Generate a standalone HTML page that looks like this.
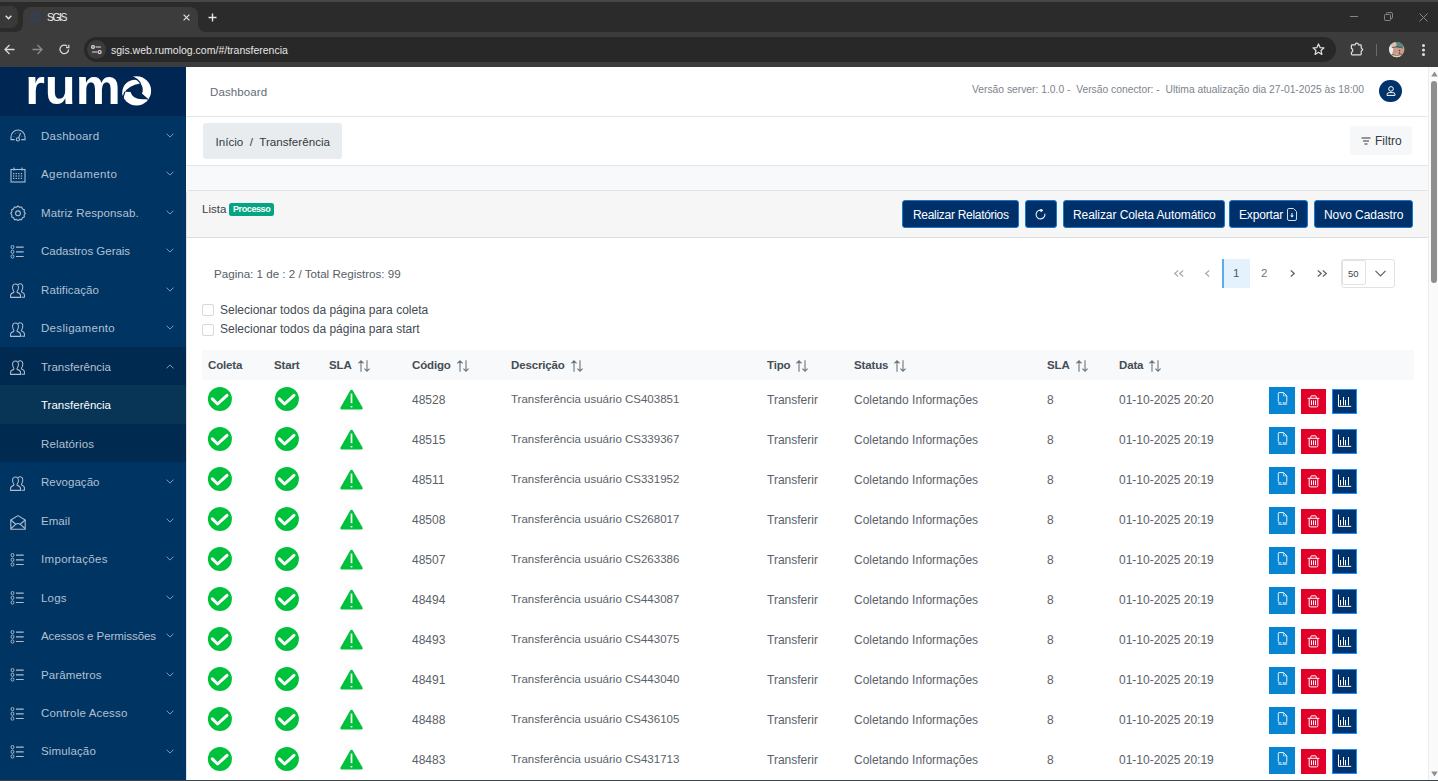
<!DOCTYPE html><html><head><meta charset="utf-8"><title>SGIS</title><style>
*{box-sizing:border-box;margin:0;padding:0}
html,body{width:1438px;height:781px;overflow:hidden;background:#fff;font-family:"Liberation Sans",sans-serif}
.abs{position:absolute}
.t{position:absolute;white-space:nowrap}
</style></head><body>
<div class="abs" style="left:0;top:0;width:1438px;height:67px;background:#3c3c3c"></div>
<div class="abs" style="left:0;top:0;width:1438px;height:32px;background:#2b2b2b"></div>
<div class="abs" style="left:0;top:0;width:1438px;height:2px;background:#474747"></div>
<div class="abs" style="left:23px;top:7px;width:175px;height:30px;border-radius:8px 8px 0 0;background:#3c3c3c"></div>
<div class="abs" style="left:15px;top:24px;width:8px;height:8px;background:#3c3c3c"></div><div class="abs" style="left:7px;top:16px;width:16px;height:16px;border-radius:0 0 8px 0;background:#2b2b2b"></div>
<div class="abs" style="left:198px;top:24px;width:8px;height:8px;background:#3c3c3c"></div><div class="abs" style="left:198px;top:16px;width:16px;height:16px;border-radius:0 0 0 8px;background:#2b2b2b"></div>
<div class="abs" style="left:-8px;top:6px;width:26px;height:22px;border-radius:7px;background:#393939"></div>
<svg class="abs" style="left:4.5px;top:14.5px" width="7" height="5" viewBox="0 0 7 5" fill="none" stroke="#e8e8e8" stroke-width="1.4"><path d="M0.7 0.8 L3.5 3.8 L6.3 0.8"/></svg>
<svg class="abs" style="left:29.5px;top:10.5px" width="11" height="13" viewBox="0 0 14 14" fill="none" stroke="#2a4672" stroke-width="1.1"><path d="M7 0.8 L12.6 4 V10 L7 13.2 L1.4 10 V4 Z"/><path d="M9.3 5.3 A3 3 0 1 0 9.3 8.7"/></svg>
<div class="t" style="left:47px;top:11.6px;font-size:10.4px;color:#f0f0f0;letter-spacing:-1.45px">SGIS</div>
<svg class="abs" style="left:182.6px;top:13.6px" width="7" height="7" viewBox="0 0 7 7" stroke="#e0e0e0" stroke-width="1.2"><path d="M0.6 0.6 L6.4 6.4 M6.4 0.6 L0.6 6.4"/></svg>
<svg class="abs" style="left:208px;top:13px" width="9" height="9" viewBox="0 0 9 9" stroke="#e6e6e6" stroke-width="1.4"><path d="M4.5 0.5 V8.5 M0.5 4.5 H8.5"/></svg>
<div class="abs" style="left:1350px;top:16px;width:8px;height:1px;background:#858585"></div>
<svg class="abs" style="left:1384px;top:12px" width="9" height="9" viewBox="0 0 9 9" fill="none" stroke="#858585" stroke-width="1"><rect x="0.5" y="2.5" width="6" height="6" rx="0.8"/><path d="M2.5 2.5 V1.5 Q2.5 0.5 3.5 0.5 H7 Q8.5 0.5 8.5 2 V5.5 Q8.5 6.5 7 6.5"/></svg>
<svg class="abs" style="left:1419px;top:13px" width="9" height="9" viewBox="0 0 9 9" stroke="#858585" stroke-width="1"><path d="M0.5 0.5 L8.5 8.5 M8.5 0.5 L0.5 8.5"/></svg>
<svg class="abs" style="left:4px;top:44px" width="11" height="11" viewBox="0 0 11 11" fill="none" stroke="#d8d8d8" stroke-width="1.3"><path d="M10.5 5.5 H1 M5.5 1 L1 5.5 L5.5 10"/></svg>
<svg class="abs" style="left:32px;top:44px" width="11" height="11" viewBox="0 0 11 11" fill="none" stroke="#8a8a8a" stroke-width="1.3"><path d="M0.5 5.5 H10 M5.5 1 L10 5.5 L5.5 10"/></svg>
<svg class="abs" style="left:59px;top:44px" width="11" height="11" viewBox="0 0 11 11" fill="none" stroke="#d8d8d8" stroke-width="1.3"><path d="M9.6 5.5 A4.3 4.3 0 1 1 8.2 2.2"/><path d="M9.8 0.8 V3.6 H7" /></svg>
<div class="abs" style="left:84px;top:37px;width:1252px;height:25px;border-radius:12.5px;background:#282828"></div>
<div class="abs" style="left:87px;top:40px;width:19px;height:19px;border-radius:50%;background:#3b3b3b"></div>
<svg class="abs" style="left:91px;top:45px" width="11" height="9" viewBox="0 0 11 9" fill="none" stroke="#e0e0e0" stroke-width="1.2"><circle cx="2" cy="2" r="1.4"/><path d="M4.6 2 H10 M1 7 H6.2"/><circle cx="8.6" cy="7" r="1.5"/></svg>
<div class="t" style="left:111px;top:43.7px;font-size:10.5px;color:#e6e6e6">sgis.web.rumolog.com<span style="color:#e6e6e6">/#/transferencia</span></div>
<svg class="abs" style="left:1312px;top:43px" width="13" height="13" viewBox="0 0 13 13" fill="none" stroke="#e0e0e0" stroke-width="1.2" stroke-linejoin="round"><path d="M6.5 0.9 L8.1 4.6 L12 4.9 L9 7.5 L9.9 11.4 L6.5 9.3 L3.1 11.4 L4 7.5 L1 4.9 L4.9 4.6 Z"/></svg>
<svg class="abs" style="left:1350px;top:42px" width="15" height="14" viewBox="0 0 15 14" fill="none" stroke="#e0e0e0" stroke-width="1.2" stroke-linejoin="round"><path d="M2.2 2.8 H5.2 Q5.2 1.2 6.8 1.2 Q8.4 1.2 8.4 2.8 H10.4 Q11.2 2.8 11.2 3.6 V6 L12.8 7.6 L11.2 9.2 V12 Q11.2 12.8 10.4 12.8 H2.2 Q1.4 12.8 1.4 12 V10.2 Q2.8 10.2 2.8 8.4 Q2.8 6.6 1.4 6.6 V3.6 Q1.4 2.8 2.2 2.8 Z"/></svg>
<div class="abs" style="left:1376px;top:44px;width:1px;height:12px;background:#6a6a6a"></div>
<svg class="abs" style="left:1389px;top:42px" width="16" height="16" viewBox="0 0 16 16"><defs><clipPath id="av"><circle cx="7.7" cy="7.6" r="7.7"/></clipPath></defs><g clip-path="url(#av)"><rect width="16" height="16" fill="#caa08c"/><ellipse cx="1.5" cy="7" rx="2.6" ry="6" fill="#e8eef0"/><ellipse cx="10.5" cy="2.5" rx="5" ry="3.2" fill="#4f8a86"/><ellipse cx="4.5" cy="2.5" rx="3" ry="2.5" fill="#d9c2b0"/><ellipse cx="8" cy="15" rx="6" ry="2.6" fill="#e6dcbc"/><path d="M2.8 5.5 Q8 4 14 6" stroke="#5a4038" stroke-width="0.8" fill="none"/><circle cx="10.5" cy="8.5" r="0.8" fill="#4a3a36"/><circle cx="10.5" cy="11" r="0.8" fill="#4a3a36"/><ellipse cx="6" cy="9.5" rx="1.4" ry="1.8" fill="#d58a8a"/><path d="M3 12.5 Q7 14.5 13 12.5" stroke="#5a4038" stroke-width="0.7" fill="none"/></g></svg>
<div class="abs" style="left:1422px;top:44px;width:3px;height:3px;border-radius:50%;background:#e0e0e0;box-shadow:0 4.5px 0 #e0e0e0,0 9px 0 #e0e0e0"></div>
<div class="abs" style="left:0;top:67px;width:186px;height:713px;background:#003462"></div>
<div class="abs" style="left:0;top:67px;width:186px;height:49px;background:#002654"></div>
<svg class="abs" style="left:0px;top:67px" width="186" height="49" viewBox="0 0 186 49">
<text x="25.2" y="37.4" font-family="Liberation Sans" font-weight="bold" font-size="50" fill="#fff" textLength="95.5" lengthAdjust="spacingAndGlyphs">rum</text>
<g transform="translate(136.5,23.85)">
<circle r="14.6" fill="#fff"/>
<path fill="#002654" d="M5.3,3.4 C6.9,0 6.6,-4.5 4.1,-7.2 C0,-7.2 -7.5,-4.6 -11.6,0.8 L-5.9,1.2 C-4.4,7 2,10 12.6,7.6 L10.6,7.8 Z"/>
<path fill="none" stroke="#002654" stroke-width="1.3" d="M-5.8,-14.8 C-0.5,-12.5 2.6,-10.5 4.1,-7.2"/>
<path fill="#002654" d="M-15.6,1 A15.6 15.6 0 0 1 -4.8,-14.9 L-4.4,-14.1 C-1.5,-12.8 0.5,-11.8 1.8,-10.8 A13 13 0 0 0 -14.3,2.2 Z"/>
<path fill="none" stroke="#002654" stroke-width="1.2" d="M-11.6,0.8 C-12.5,3 -13.2,5 -13.6,8"/>
<path fill="none" stroke="#002654" stroke-width="1.3" d="M5.3,3.4 L11.2,8.6"/>
</g>
</svg>
<div class="t" style="left:41px;top:128.65px;font-size:11.5px;line-height:15px;color:#b2c0d2;letter-spacing:0.227px">Dashboard</div>
<svg class="abs" style="left:9.5px;top:129px" width="16" height="14" viewBox="0 0 16 14" fill="none" stroke="#aebdd0" stroke-width="1.1">
<path d="M4.6 10.6 H1 V8 A7 7 0 0 1 15 8 V10.6 H11.2"/><path d="M8.6 8.9 L10.6 4"/><circle cx="7.9" cy="10.4" r="1.6"/>
<path d="M3.6 7.2 l0.3 0.3 M5 4.3 l0.5 0.5 M8 3.2 v0.4 M12.2 7.2 l-0.3 0.3" stroke-width="1"/></svg>
<svg class="abs" style="left:166px;top:132.90px" width="8" height="5" viewBox="0 0 8 5" fill="none" stroke="#8da0b8" stroke-width="0.95"><path d="M0.5 0.6 L4 4.1 L7.5 0.6"/></svg>
<div class="t" style="left:41px;top:167.14px;font-size:11.5px;line-height:15px;color:#b2c0d2;letter-spacing:0.419px">Agendamento</div>
<svg class="abs" style="left:10px;top:167px" width="16" height="16" viewBox="0 0 16 16" fill="none" stroke="#aebdd0" stroke-width="1.1">
<rect x="1" y="2.5" width="14" height="12.5"/><path d="M4 0.5v3 M12 0.5v3"/><rect x="3.0" y="6.0" width="1.3" height="1.2" fill="#aebdd0" stroke="none"/><rect x="3.0" y="8.4" width="1.3" height="1.2" fill="#aebdd0" stroke="none"/><rect x="3.0" y="10.8" width="1.3" height="1.2" fill="#aebdd0" stroke="none"/><rect x="5.6" y="6.0" width="1.3" height="1.2" fill="#aebdd0" stroke="none"/><rect x="5.6" y="8.4" width="1.3" height="1.2" fill="#aebdd0" stroke="none"/><rect x="5.6" y="10.8" width="1.3" height="1.2" fill="#aebdd0" stroke="none"/><rect x="8.2" y="6.0" width="1.3" height="1.2" fill="#aebdd0" stroke="none"/><rect x="8.2" y="8.4" width="1.3" height="1.2" fill="#aebdd0" stroke="none"/><rect x="8.2" y="10.8" width="1.3" height="1.2" fill="#aebdd0" stroke="none"/><rect x="10.8" y="6.0" width="1.3" height="1.2" fill="#aebdd0" stroke="none"/><rect x="10.8" y="8.4" width="1.3" height="1.2" fill="#aebdd0" stroke="none"/><rect x="10.8" y="10.8" width="1.3" height="1.2" fill="#aebdd0" stroke="none"/></svg>
<svg class="abs" style="left:166px;top:171.39px" width="8" height="5" viewBox="0 0 8 5" fill="none" stroke="#8da0b8" stroke-width="0.95"><path d="M0.5 0.6 L4 4.1 L7.5 0.6"/></svg>
<div class="t" style="left:41px;top:205.63px;font-size:11.5px;line-height:15px;color:#b2c0d2;letter-spacing:0.110px">Matriz Responsab.</div>
<svg class="abs" style="left:10px;top:205px" width="16" height="16" viewBox="0 0 16 16" fill="none" stroke="#aebdd0" stroke-width="1.1">
<path d="M8 1 L9.6 2.3 L11.6 2 L12.5 3.9 L14.4 4.7 L14.1 6.8 L15.3 8.4 L14.1 10 L14.3 12 L12.4 12.8 L11.5 14.7 L9.5 14.4 L8 15.6 L6.5 14.4 L4.5 14.7 L3.6 12.8 L1.7 12 L1.9 10 L0.7 8.4 L1.9 6.8 L1.6 4.7 L3.5 3.9 L4.4 2 L6.4 2.3 Z" stroke-linejoin="round"/><circle cx="8" cy="8.3" r="2.4"/></svg>
<svg class="abs" style="left:166px;top:209.88px" width="8" height="5" viewBox="0 0 8 5" fill="none" stroke="#8da0b8" stroke-width="0.95"><path d="M0.5 0.6 L4 4.1 L7.5 0.6"/></svg>
<div class="t" style="left:41px;top:244.12px;font-size:11.5px;line-height:15px;color:#b2c0d2;letter-spacing:-0.026px">Cadastros Gerais</div>
<svg class="abs" style="left:10px;top:245px" width="15" height="14" viewBox="0 0 15 14" fill="none" stroke="#aebdd0" stroke-width="0.95">
<ellipse cx="2.5" cy="2.1" rx="1.45" ry="1.7"/><ellipse cx="2.5" cy="6.8" rx="1.45" ry="1.7"/><ellipse cx="2.5" cy="11.5" rx="1.45" ry="1.7"/><path d="M6 2.1h7.7 M6 6.8h7.7 M6 11.5h7.7" stroke-width="1.2"/></svg>
<svg class="abs" style="left:166px;top:248.37px" width="8" height="5" viewBox="0 0 8 5" fill="none" stroke="#8da0b8" stroke-width="0.95"><path d="M0.5 0.6 L4 4.1 L7.5 0.6"/></svg>
<div class="t" style="left:41px;top:282.61px;font-size:11.5px;line-height:15px;color:#b2c0d2;letter-spacing:0.098px">Ratificação</div>
<svg class="abs" style="left:10px;top:283px" width="15" height="15" viewBox="0 0 16 15" preserveAspectRatio="none" fill="none" stroke="#aebdd0" stroke-width="1.1" stroke-linejoin="round">
<path d="M5.5 1 C3.2 1 2.6 3 2.8 5 C3 7 4 8 4.2 8.6 L4 9.4 C2 10 0.6 10.8 0.6 12.5 V14.4 H11.2 V12.5 C11.2 10.8 9.6 10 7.6 9.4 L7.4 8.6 C7.8 8 8.8 7 9 5 C9.2 3 8.4 1 5.5 1 Z"/>
<path d="M8.6 1.6 C9.4 1 10.2 0.8 10.8 0.8 C13.2 0.8 13.8 2.8 13.6 4.8 C13.4 6.6 12.6 7.6 12.2 8.2 L12.4 9 C14.2 9.6 15.4 10.4 15.4 12 V14.2 H12.2"/></svg>
<svg class="abs" style="left:166px;top:286.86px" width="8" height="5" viewBox="0 0 8 5" fill="none" stroke="#8da0b8" stroke-width="0.95"><path d="M0.5 0.6 L4 4.1 L7.5 0.6"/></svg>
<div class="t" style="left:41px;top:321.10px;font-size:11.5px;line-height:15px;color:#b2c0d2;letter-spacing:0.313px">Desligamento</div>
<svg class="abs" style="left:10px;top:322px" width="15" height="15" viewBox="0 0 16 15" preserveAspectRatio="none" fill="none" stroke="#aebdd0" stroke-width="1.1" stroke-linejoin="round">
<path d="M5.5 1 C3.2 1 2.6 3 2.8 5 C3 7 4 8 4.2 8.6 L4 9.4 C2 10 0.6 10.8 0.6 12.5 V14.4 H11.2 V12.5 C11.2 10.8 9.6 10 7.6 9.4 L7.4 8.6 C7.8 8 8.8 7 9 5 C9.2 3 8.4 1 5.5 1 Z"/>
<path d="M8.6 1.6 C9.4 1 10.2 0.8 10.8 0.8 C13.2 0.8 13.8 2.8 13.6 4.8 C13.4 6.6 12.6 7.6 12.2 8.2 L12.4 9 C14.2 9.6 15.4 10.4 15.4 12 V14.2 H12.2"/></svg>
<svg class="abs" style="left:166px;top:325.35px" width="8" height="5" viewBox="0 0 8 5" fill="none" stroke="#8da0b8" stroke-width="0.95"><path d="M0.5 0.6 L4 4.1 L7.5 0.6"/></svg>
<div class="abs" style="left:0;top:346.94px;width:186px;height:38.49px;background:#012a50"></div>
<div class="t" style="left:41px;top:359.58px;font-size:11.5px;line-height:15px;color:#b2c0d2;letter-spacing:0.011px">Transferência</div>
<svg class="abs" style="left:10px;top:360px" width="15" height="15" viewBox="0 0 16 15" preserveAspectRatio="none" fill="none" stroke="#aebdd0" stroke-width="1.1" stroke-linejoin="round">
<path d="M5.5 1 C3.2 1 2.6 3 2.8 5 C3 7 4 8 4.2 8.6 L4 9.4 C2 10 0.6 10.8 0.6 12.5 V14.4 H11.2 V12.5 C11.2 10.8 9.6 10 7.6 9.4 L7.4 8.6 C7.8 8 8.8 7 9 5 C9.2 3 8.4 1 5.5 1 Z"/>
<path d="M8.6 1.6 C9.4 1 10.2 0.8 10.8 0.8 C13.2 0.8 13.8 2.8 13.6 4.8 C13.4 6.6 12.6 7.6 12.2 8.2 L12.4 9 C14.2 9.6 15.4 10.4 15.4 12 V14.2 H12.2"/></svg>
<svg class="abs" style="left:166px;top:363.83px" width="8" height="5" viewBox="0 0 8 5" fill="none" stroke="#8da0b8" stroke-width="0.95"><path d="M0.5 4.4 L4 0.9 L7.5 4.4"/></svg>
<div class="abs" style="left:0;top:385.43px;width:186px;height:38.49px;background:#083556"></div>
<div class="t" style="left:41px;top:398.07px;font-size:11.5px;line-height:15px;color:#ffffff;letter-spacing:0.011px">Transferência</div>
<div class="abs" style="left:0;top:423.92px;width:186px;height:38.49px;background:#012a50"></div>
<div class="t" style="left:41px;top:436.56px;font-size:11.5px;line-height:15px;color:#b2c0d2;letter-spacing:0.125px">Relatórios</div>
<div class="t" style="left:41px;top:475.06px;font-size:11.5px;line-height:15px;color:#b2c0d2;letter-spacing:0.037px">Revogação</div>
<svg class="abs" style="left:10px;top:476px" width="15" height="15" viewBox="0 0 16 15" preserveAspectRatio="none" fill="none" stroke="#aebdd0" stroke-width="1.1" stroke-linejoin="round">
<path d="M5.5 1 C3.2 1 2.6 3 2.8 5 C3 7 4 8 4.2 8.6 L4 9.4 C2 10 0.6 10.8 0.6 12.5 V14.4 H11.2 V12.5 C11.2 10.8 9.6 10 7.6 9.4 L7.4 8.6 C7.8 8 8.8 7 9 5 C9.2 3 8.4 1 5.5 1 Z"/>
<path d="M8.6 1.6 C9.4 1 10.2 0.8 10.8 0.8 C13.2 0.8 13.8 2.8 13.6 4.8 C13.4 6.6 12.6 7.6 12.2 8.2 L12.4 9 C14.2 9.6 15.4 10.4 15.4 12 V14.2 H12.2"/></svg>
<svg class="abs" style="left:166px;top:479.31px" width="8" height="5" viewBox="0 0 8 5" fill="none" stroke="#8da0b8" stroke-width="0.95"><path d="M0.5 0.6 L4 4.1 L7.5 0.6"/></svg>
<div class="t" style="left:41px;top:513.54px;font-size:11.5px;line-height:15px;color:#b2c0d2;letter-spacing:0.050px">Email</div>
<svg class="abs" style="left:10px;top:514.5px" width="16" height="15" viewBox="0 0 16 15" fill="none" stroke="#aebdd0" stroke-width="1.1" stroke-linejoin="round">
<path d="M0.8 5 L8 0.6 L15.2 5 V14.2 H0.8 Z"/><path d="M0.8 5 L5.5 9 M15.2 5 L10.5 9 M1 13.5 L6 9.2 C7.2 8.3 8.8 8.3 10 9.2 L15 13.5"/></svg>
<svg class="abs" style="left:166px;top:517.79px" width="8" height="5" viewBox="0 0 8 5" fill="none" stroke="#8da0b8" stroke-width="0.95"><path d="M0.5 0.6 L4 4.1 L7.5 0.6"/></svg>
<div class="t" style="left:41px;top:552.04px;font-size:11.5px;line-height:15px;color:#b2c0d2;letter-spacing:0.323px">Importações</div>
<svg class="abs" style="left:10px;top:553px" width="15" height="14" viewBox="0 0 15 14" fill="none" stroke="#aebdd0" stroke-width="0.95">
<ellipse cx="2.5" cy="2.1" rx="1.45" ry="1.7"/><ellipse cx="2.5" cy="6.8" rx="1.45" ry="1.7"/><ellipse cx="2.5" cy="11.5" rx="1.45" ry="1.7"/><path d="M6 2.1h7.7 M6 6.8h7.7 M6 11.5h7.7" stroke-width="1.2"/></svg>
<svg class="abs" style="left:166px;top:556.29px" width="8" height="5" viewBox="0 0 8 5" fill="none" stroke="#8da0b8" stroke-width="0.95"><path d="M0.5 0.6 L4 4.1 L7.5 0.6"/></svg>
<div class="t" style="left:41px;top:590.52px;font-size:11.5px;line-height:15px;color:#b2c0d2;letter-spacing:0.221px">Logs</div>
<svg class="abs" style="left:10px;top:591px" width="15" height="14" viewBox="0 0 15 14" fill="none" stroke="#aebdd0" stroke-width="0.95">
<ellipse cx="2.5" cy="2.1" rx="1.45" ry="1.7"/><ellipse cx="2.5" cy="6.8" rx="1.45" ry="1.7"/><ellipse cx="2.5" cy="11.5" rx="1.45" ry="1.7"/><path d="M6 2.1h7.7 M6 6.8h7.7 M6 11.5h7.7" stroke-width="1.2"/></svg>
<svg class="abs" style="left:166px;top:594.77px" width="8" height="5" viewBox="0 0 8 5" fill="none" stroke="#8da0b8" stroke-width="0.95"><path d="M0.5 0.6 L4 4.1 L7.5 0.6"/></svg>
<div class="t" style="left:41px;top:629.01px;font-size:11.5px;line-height:15px;color:#b2c0d2;letter-spacing:-0.067px">Acessos e Permissões</div>
<svg class="abs" style="left:10px;top:630px" width="15" height="14" viewBox="0 0 15 14" fill="none" stroke="#aebdd0" stroke-width="0.95">
<ellipse cx="2.5" cy="2.1" rx="1.45" ry="1.7"/><ellipse cx="2.5" cy="6.8" rx="1.45" ry="1.7"/><ellipse cx="2.5" cy="11.5" rx="1.45" ry="1.7"/><path d="M6 2.1h7.7 M6 6.8h7.7 M6 11.5h7.7" stroke-width="1.2"/></svg>
<svg class="abs" style="left:166px;top:633.26px" width="8" height="5" viewBox="0 0 8 5" fill="none" stroke="#8da0b8" stroke-width="0.95"><path d="M0.5 0.6 L4 4.1 L7.5 0.6"/></svg>
<div class="t" style="left:41px;top:667.50px;font-size:11.5px;line-height:15px;color:#b2c0d2;letter-spacing:0.128px">Parâmetros</div>
<svg class="abs" style="left:10px;top:668px" width="15" height="14" viewBox="0 0 15 14" fill="none" stroke="#aebdd0" stroke-width="0.95">
<ellipse cx="2.5" cy="2.1" rx="1.45" ry="1.7"/><ellipse cx="2.5" cy="6.8" rx="1.45" ry="1.7"/><ellipse cx="2.5" cy="11.5" rx="1.45" ry="1.7"/><path d="M6 2.1h7.7 M6 6.8h7.7 M6 11.5h7.7" stroke-width="1.2"/></svg>
<svg class="abs" style="left:166px;top:671.75px" width="8" height="5" viewBox="0 0 8 5" fill="none" stroke="#8da0b8" stroke-width="0.95"><path d="M0.5 0.6 L4 4.1 L7.5 0.6"/></svg>
<div class="t" style="left:41px;top:706.00px;font-size:11.5px;line-height:15px;color:#b2c0d2;letter-spacing:0.189px">Controle Acesso</div>
<svg class="abs" style="left:10px;top:707px" width="15" height="14" viewBox="0 0 15 14" fill="none" stroke="#aebdd0" stroke-width="0.95">
<ellipse cx="2.5" cy="2.1" rx="1.45" ry="1.7"/><ellipse cx="2.5" cy="6.8" rx="1.45" ry="1.7"/><ellipse cx="2.5" cy="11.5" rx="1.45" ry="1.7"/><path d="M6 2.1h7.7 M6 6.8h7.7 M6 11.5h7.7" stroke-width="1.2"/></svg>
<svg class="abs" style="left:166px;top:710.25px" width="8" height="5" viewBox="0 0 8 5" fill="none" stroke="#8da0b8" stroke-width="0.95"><path d="M0.5 0.6 L4 4.1 L7.5 0.6"/></svg>
<div class="t" style="left:41px;top:744.49px;font-size:11.5px;line-height:15px;color:#b2c0d2;letter-spacing:0.137px">Simulação</div>
<svg class="abs" style="left:10px;top:745px" width="15" height="14" viewBox="0 0 15 14" fill="none" stroke="#aebdd0" stroke-width="0.95">
<ellipse cx="2.5" cy="2.1" rx="1.45" ry="1.7"/><ellipse cx="2.5" cy="6.8" rx="1.45" ry="1.7"/><ellipse cx="2.5" cy="11.5" rx="1.45" ry="1.7"/><path d="M6 2.1h7.7 M6 6.8h7.7 M6 11.5h7.7" stroke-width="1.2"/></svg>
<svg class="abs" style="left:166px;top:748.74px" width="8" height="5" viewBox="0 0 8 5" fill="none" stroke="#8da0b8" stroke-width="0.95"><path d="M0.5 0.6 L4 4.1 L7.5 0.6"/></svg>
<div class="abs" style="left:186px;top:116px;width:1242px;height:1px;background:#e4e7ea"></div>
<div class="t" style="left:210px;top:85.5px;font-size:11.5px;letter-spacing:0.1px;color:#5f6b77">Dashboard</div>
<div class="t" style="left:972px;top:84px;font-size:10.3px;color:#7d848c">Versão server: 1.0.0 -&nbsp; Versão conector: -&nbsp; Ultima atualização dia 27-01-2025 às 18:00</div>
<div class="abs" style="left:1379px;top:79.7px;width:22.5px;height:22.5px;border-radius:50%;background:#00336a"></div>
<svg class="abs" style="left:1385.5px;top:85.5px" width="10" height="11" viewBox="0 0 10 11" fill="none" stroke="#fff" stroke-width="1"><circle cx="5" cy="2.9" r="2.3"/><path d="M1 9.4 V8.6 Q1 6.6 3.2 6.6 H6.8 Q9 6.6 9 8.6 V9.4 Z"/></svg>
<div class="abs" style="left:203px;top:123px;width:139px;height:36px;border-radius:3px;background:#e9ecef"></div>
<div class="t" style="left:215.5px;top:134.6px;font-size:11.65px;color:#333a40">Início&nbsp; /&nbsp; Transferência</div>
<div class="abs" style="left:1350px;top:126px;width:62px;height:29px;border-radius:3px;background:#f6f7f9"></div>
<svg class="abs" style="left:1361px;top:137px" width="10" height="8" viewBox="0 0 10 8" stroke="#333" stroke-width="1.1"><path d="M0.5 1 H9.5 M2 4 H8 M3.5 7 H6.5"/></svg>
<div class="t" style="left:1375px;top:134px;font-size:12px;color:#333a40">Filtro</div>
<div class="abs" style="left:186px;top:165px;width:1242px;height:1px;background:#e4e7ea"></div>
<div class="abs" style="left:186px;top:166px;width:1242px;height:615px;background:#f8f9fa"></div>
<div class="abs" style="left:186px;top:190px;width:1243px;height:600px;background:#fff;border:1px solid #dfe1e4;border-radius:3px"></div>
<div class="abs" style="left:187px;top:191px;width:1241px;height:47px;background:#f6f6f6;border-bottom:1px solid #dcdde0"></div>
<div class="t" style="left:202px;top:203px;font-size:11.5px;color:#3a4249">Lista</div>
<div class="abs" style="left:229px;top:202.7px;width:44.5px;height:13.3px;border-radius:2.5px;background:#04a582"></div>
<div class="t" style="left:233px;top:203.6px;font-size:9px;font-weight:bold;letter-spacing:-0.4px;color:#fff">Processo</div>
<div class="abs" style="left:902px;top:200px;width:117px;height:28px;border-radius:3px;background:#00306a;border:1px solid #1578c8"></div>
<div class="abs" style="left:1025px;top:200px;width:32px;height:28px;border-radius:3px;background:#00306a;border:1px solid #1578c8"></div>
<div class="abs" style="left:1063px;top:200px;width:162px;height:28px;border-radius:3px;background:#00306a;border:1px solid #1578c8"></div>
<div class="abs" style="left:1229px;top:200px;width:79px;height:28px;border-radius:3px;background:#00306a;border:1px solid #1578c8"></div>
<div class="abs" style="left:1314px;top:200px;width:99px;height:28px;border-radius:3px;background:#00306a;border:1px solid #1578c8"></div>
<div class="t" style="left:913px;top:208px;font-size:12px;color:#fff;letter-spacing:-0.3px">Realizar Relatórios</div>
<svg class="abs" style="left:1035.3px;top:208.9px" width="11" height="11" viewBox="0 0 11 11" fill="none" stroke="#e8eef5" stroke-width="1.1"><path d="M6.6 1.25 A4.4 4.4 0 1 0 9.8 4.6"/><path d="M5.6 0.2 L8 1.3 L5.9 2.9 Z" fill="#fff" stroke="#fff" stroke-width="0.6" stroke-linejoin="round"/></svg>
<div class="t" style="left:1073px;top:208px;font-size:12px;color:#fff;letter-spacing:-0.08px">Realizar Coleta Automático</div>
<div class="t" style="left:1239px;top:208px;font-size:12px;color:#fff;letter-spacing:-0.15px">Exportar</div>
<svg class="abs" style="left:1287px;top:208px" width="10" height="13" viewBox="0 0 10 13" fill="none" stroke="#d5dde8" stroke-width="1"><path d="M1.8 0.5 H6.5 L9.5 3.5 V11 Q9.5 12.5 8 12.5 H2 Q0.5 12.5 0.5 11 V1.8 Q0.5 0.5 1.8 0.5 Z"/><path d="M5 5 V8.6" stroke-width="1.2"/><path d="M3.2 7.6 L5 9.6 L6.8 7.6 Z" fill="#fff" stroke="none"/></svg>
<div class="t" style="left:1324px;top:208px;font-size:12px;color:#fff;letter-spacing:-0.05px">Novo Cadastro</div>
<div class="t" style="left:214px;top:267px;font-size:11.6px;color:#555d65">Pagina: 1 de : 2 / Total Registros: 99</div>
<svg class="abs" style="left:1174px;top:270px" width="5" height="7" viewBox="0 0 5 7" fill="none" stroke="#a9afb5" stroke-width="1.3"><path d="M4.2 0.6 L0.8 3.5 L4.2 6.4"/></svg>
<svg class="abs" style="left:1179px;top:270px" width="5" height="7" viewBox="0 0 5 7" fill="none" stroke="#a9afb5" stroke-width="1.3"><path d="M4.2 0.6 L0.8 3.5 L4.2 6.4"/></svg>
<svg class="abs" style="left:1205px;top:270px" width="5" height="7" viewBox="0 0 5 7" fill="none" stroke="#a9afb5" stroke-width="1.3"><path d="M4.2 0.6 L0.8 3.5 L4.2 6.4"/></svg>
<div class="abs" style="left:1222px;top:259px;width:28px;height:29px;background:#e3f2fd;border-left:2px solid #5aaeee"></div>
<div class="t" style="left:1233px;top:267px;font-size:11.5px;color:#4f5861">1</div>
<div class="t" style="left:1261px;top:267px;font-size:11.5px;color:#6b737b">2</div>
<svg class="abs" style="left:1290px;top:270px" width="5" height="7" viewBox="0 0 5 7" fill="none" stroke="#5f6870" stroke-width="1.3"><path d="M0.8 0.6 L4.2 3.5 L0.8 6.4"/></svg>
<svg class="abs" style="left:1317px;top:270px" width="5" height="7" viewBox="0 0 5 7" fill="none" stroke="#5f6870" stroke-width="1.3"><path d="M0.8 0.6 L4.2 3.5 L0.8 6.4"/></svg>
<svg class="abs" style="left:1322px;top:270px" width="5" height="7" viewBox="0 0 5 7" fill="none" stroke="#5f6870" stroke-width="1.3"><path d="M0.8 0.6 L4.2 3.5 L0.8 6.4"/></svg>
<div class="abs" style="left:1341px;top:259px;width:54px;height:29px;border:1px solid #dfe3e7;border-radius:3px;background:#fff"></div>
<div class="abs" style="left:1342px;top:260px;width:24px;height:25px;border:1px solid #dfe3e7;border-radius:2px;background:#fff"></div>
<div class="t" style="left:1348px;top:268px;font-size:9.5px;color:#444">50</div>
<svg class="abs" style="left:1375px;top:270px" width="11" height="7" viewBox="0 0 11 7" fill="none" stroke="#5a636b" stroke-width="1.2"><path d="M0.5 0.8 L5.5 5.8 L10.5 0.8"/></svg>
<div class="abs" style="left:202px;top:304px;width:12px;height:12px;border:1px solid #d5d9dd;border-radius:2px;background:#fff"></div>
<div class="t" style="left:220px;top:302.5px;font-size:12px;color:#434b53">Selecionar todos da página para coleta</div>
<div class="abs" style="left:202px;top:323.5px;width:12px;height:12px;border:1px solid #d5d9dd;border-radius:2px;background:#fff"></div>
<div class="t" style="left:220px;top:322.0px;font-size:12px;color:#434b53">Selecionar todos da página para start</div>
<div class="abs" style="left:202px;top:350px;width:1212px;height:30px;background:#f8f9fa"></div>
<div class="t" style="left:208px;top:359px;font-size:11.5px;font-weight:bold;color:#454d55;letter-spacing:-0.15px">Coleta</div>
<div class="t" style="left:274px;top:359px;font-size:11.5px;font-weight:bold;color:#454d55;letter-spacing:-0.15px">Start</div>
<div class="t" style="left:329px;top:359px;font-size:11.5px;font-weight:bold;color:#454d55;letter-spacing:-0.15px">SLA<svg style="margin-left:6px;vertical-align:-3px" width="12" height="12" viewBox="0 0 12 12" fill="none" stroke="#6c757d" stroke-width="1.1"><path d="M3 11.8 V0.8 M0.4 3.4 L3 0.8 L5.6 3.4 M9 0.2 V11.2 M6.4 8.6 L9 11.2 L11.6 8.6"/></svg></div>
<div class="t" style="left:412px;top:359px;font-size:11.5px;font-weight:bold;color:#454d55;letter-spacing:-0.15px">Código<svg style="margin-left:6px;vertical-align:-3px" width="12" height="12" viewBox="0 0 12 12" fill="none" stroke="#6c757d" stroke-width="1.1"><path d="M3 11.8 V0.8 M0.4 3.4 L3 0.8 L5.6 3.4 M9 0.2 V11.2 M6.4 8.6 L9 11.2 L11.6 8.6"/></svg></div>
<div class="t" style="left:511px;top:359px;font-size:11.5px;font-weight:bold;color:#454d55;letter-spacing:-0.15px">Descrição<svg style="margin-left:6px;vertical-align:-3px" width="12" height="12" viewBox="0 0 12 12" fill="none" stroke="#6c757d" stroke-width="1.1"><path d="M3 11.8 V0.8 M0.4 3.4 L3 0.8 L5.6 3.4 M9 0.2 V11.2 M6.4 8.6 L9 11.2 L11.6 8.6"/></svg></div>
<div class="t" style="left:767px;top:359px;font-size:11.5px;font-weight:bold;color:#454d55;letter-spacing:-0.15px">Tipo<svg style="margin-left:6px;vertical-align:-3px" width="12" height="12" viewBox="0 0 12 12" fill="none" stroke="#6c757d" stroke-width="1.1"><path d="M3 11.8 V0.8 M0.4 3.4 L3 0.8 L5.6 3.4 M9 0.2 V11.2 M6.4 8.6 L9 11.2 L11.6 8.6"/></svg></div>
<div class="t" style="left:854px;top:359px;font-size:11.5px;font-weight:bold;color:#454d55;letter-spacing:-0.15px">Status<svg style="margin-left:6px;vertical-align:-3px" width="12" height="12" viewBox="0 0 12 12" fill="none" stroke="#6c757d" stroke-width="1.1"><path d="M3 11.8 V0.8 M0.4 3.4 L3 0.8 L5.6 3.4 M9 0.2 V11.2 M6.4 8.6 L9 11.2 L11.6 8.6"/></svg></div>
<div class="t" style="left:1047px;top:359px;font-size:11.5px;font-weight:bold;color:#454d55;letter-spacing:-0.15px">SLA<svg style="margin-left:6px;vertical-align:-3px" width="12" height="12" viewBox="0 0 12 12" fill="none" stroke="#6c757d" stroke-width="1.1"><path d="M3 11.8 V0.8 M0.4 3.4 L3 0.8 L5.6 3.4 M9 0.2 V11.2 M6.4 8.6 L9 11.2 L11.6 8.6"/></svg></div>
<div class="t" style="left:1119px;top:359px;font-size:11.5px;font-weight:bold;color:#454d55;letter-spacing:-0.15px">Data<svg style="margin-left:6px;vertical-align:-3px" width="12" height="12" viewBox="0 0 12 12" fill="none" stroke="#6c757d" stroke-width="1.1"><path d="M3 11.8 V0.8 M0.4 3.4 L3 0.8 L5.6 3.4 M9 0.2 V11.2 M6.4 8.6 L9 11.2 L11.6 8.6"/></svg></div>
<svg class="abs" style="left:207px;top:387px" width="26" height="26" viewBox="0 0 26 26"><circle cx="12.9" cy="12.1" r="12" fill="#00c13b"/><path d="M5.3 11.9 L10.6 17 L20 8.3" fill="none" stroke="#fff" stroke-width="3" stroke-linecap="round" stroke-linejoin="round"/></svg>
<svg class="abs" style="left:274px;top:387px" width="26" height="26" viewBox="0 0 26 26"><circle cx="12.9" cy="12.1" r="12" fill="#00c13b"/><path d="M5.3 11.9 L10.6 17 L20 8.3" fill="none" stroke="#fff" stroke-width="3" stroke-linecap="round" stroke-linejoin="round"/></svg>
<svg class="abs" style="left:340px;top:389px" width="23" height="21" viewBox="0 0 23 21"><path d="M11.5 2 L21.4 19.2 H1.6 Z" fill="#00c13b" stroke="#00c13b" stroke-width="2.6" stroke-linejoin="round"/><path d="M11.5 4.6 V14.2" stroke="#fff" stroke-width="1.7"/><rect x="10.65" y="17" width="1.7" height="1.4" fill="#fff"/></svg>
<div class="t" style="left:412px;top:393px;font-size:12px;color:#5a6169">48528</div>
<div class="t" style="left:511px;top:393px;font-size:11.5px;color:#5a6169">Transferência usuário CS403851</div>
<div class="t" style="left:767px;top:393px;font-size:12px;color:#5a6169">Transferir</div>
<div class="t" style="left:854px;top:393px;font-size:12px;color:#5a6169">Coletando Informações</div>
<div class="t" style="left:1047px;top:393px;font-size:12px;color:#5a6169">8</div>
<div class="t" style="left:1119px;top:393px;font-size:12px;color:#5a6169">01-10-2025 20:20</div>
<div class="abs" style="left:1269px;top:386.5px;width:26px;height:27px;background:#0784d2"></div>
<svg class="abs" style="left:1276px;top:392px" width="13" height="14" viewBox="0 0 13 14" fill="none" stroke="#fff" stroke-width="0.9"><path d="M2.3 9.8 V1.2 Q2.3 0.6 3 0.6 H7.6 L10.8 3.8 V9.8"/><path d="M7.6 0.8 V3.8 H10.6" stroke-width="0.7"/><text x="6.5" y="12.8" font-size="4.2" font-weight="bold" fill="#fff" stroke="none" text-anchor="middle" font-family="Liberation Sans" textLength="9" lengthAdjust="spacingAndGlyphs">XLSX</text></svg>
<div class="abs" style="left:1301px;top:389px;width:25px;height:25px;background:#e00028"></div>
<svg class="abs" style="left:1307px;top:395px" width="13" height="13" viewBox="0 0 13 13" fill="none" stroke="#fff" stroke-width="1.2" stroke-linejoin="round"><path d="M0.6 3.3 H12.4 M3.8 3.2 V1.6 Q3.8 0.8 4.6 0.8 H8.4 Q9.2 0.8 9.2 1.6 V3.2 M2.2 3.4 V10.8 Q2.2 11.9 3.3 11.9 H9.7 Q10.8 11.9 10.8 10.8 V3.4 M4.5 5.4 V10 M6.5 5.4 V10 M8.5 5.4 V10" stroke-width="1"/></svg>
<div class="abs" style="left:1332px;top:389px;width:25px;height:25px;background:#00336b;border:1px solid #1b8cff"></div>
<svg class="abs" style="left:1337px;top:394px" width="15" height="14" viewBox="0 0 15 14" fill="none" stroke="#fff" stroke-width="1"><path d="M1.5 0.5 V12.4 H14.2"/><path d="M3.5 11.4 V6 M6.5 11.4 V3 M8.5 11.4 V6 M11.5 11.4 V3" stroke-width="1"/></svg>
<svg class="abs" style="left:207px;top:427px" width="26" height="26" viewBox="0 0 26 26"><circle cx="12.9" cy="12.1" r="12" fill="#00c13b"/><path d="M5.3 11.9 L10.6 17 L20 8.3" fill="none" stroke="#fff" stroke-width="3" stroke-linecap="round" stroke-linejoin="round"/></svg>
<svg class="abs" style="left:274px;top:427px" width="26" height="26" viewBox="0 0 26 26"><circle cx="12.9" cy="12.1" r="12" fill="#00c13b"/><path d="M5.3 11.9 L10.6 17 L20 8.3" fill="none" stroke="#fff" stroke-width="3" stroke-linecap="round" stroke-linejoin="round"/></svg>
<svg class="abs" style="left:340px;top:429px" width="23" height="21" viewBox="0 0 23 21"><path d="M11.5 2 L21.4 19.2 H1.6 Z" fill="#00c13b" stroke="#00c13b" stroke-width="2.6" stroke-linejoin="round"/><path d="M11.5 4.6 V14.2" stroke="#fff" stroke-width="1.7"/><rect x="10.65" y="17" width="1.7" height="1.4" fill="#fff"/></svg>
<div class="t" style="left:412px;top:433px;font-size:12px;color:#5a6169">48515</div>
<div class="t" style="left:511px;top:433px;font-size:11.5px;color:#5a6169">Transferência usuário CS339367</div>
<div class="t" style="left:767px;top:433px;font-size:12px;color:#5a6169">Transferir</div>
<div class="t" style="left:854px;top:433px;font-size:12px;color:#5a6169">Coletando Informações</div>
<div class="t" style="left:1047px;top:433px;font-size:12px;color:#5a6169">8</div>
<div class="t" style="left:1119px;top:433px;font-size:12px;color:#5a6169">01-10-2025 20:19</div>
<div class="abs" style="left:1269px;top:426.5px;width:26px;height:27px;background:#0784d2"></div>
<svg class="abs" style="left:1276px;top:432px" width="13" height="14" viewBox="0 0 13 14" fill="none" stroke="#fff" stroke-width="0.9"><path d="M2.3 9.8 V1.2 Q2.3 0.6 3 0.6 H7.6 L10.8 3.8 V9.8"/><path d="M7.6 0.8 V3.8 H10.6" stroke-width="0.7"/><text x="6.5" y="12.8" font-size="4.2" font-weight="bold" fill="#fff" stroke="none" text-anchor="middle" font-family="Liberation Sans" textLength="9" lengthAdjust="spacingAndGlyphs">XLSX</text></svg>
<div class="abs" style="left:1301px;top:429px;width:25px;height:25px;background:#e00028"></div>
<svg class="abs" style="left:1307px;top:435px" width="13" height="13" viewBox="0 0 13 13" fill="none" stroke="#fff" stroke-width="1.2" stroke-linejoin="round"><path d="M0.6 3.3 H12.4 M3.8 3.2 V1.6 Q3.8 0.8 4.6 0.8 H8.4 Q9.2 0.8 9.2 1.6 V3.2 M2.2 3.4 V10.8 Q2.2 11.9 3.3 11.9 H9.7 Q10.8 11.9 10.8 10.8 V3.4 M4.5 5.4 V10 M6.5 5.4 V10 M8.5 5.4 V10" stroke-width="1"/></svg>
<div class="abs" style="left:1332px;top:429px;width:25px;height:25px;background:#00336b;border:1px solid #1b8cff"></div>
<svg class="abs" style="left:1337px;top:434px" width="15" height="14" viewBox="0 0 15 14" fill="none" stroke="#fff" stroke-width="1"><path d="M1.5 0.5 V12.4 H14.2"/><path d="M3.5 11.4 V6 M6.5 11.4 V3 M8.5 11.4 V6 M11.5 11.4 V3" stroke-width="1"/></svg>
<svg class="abs" style="left:207px;top:467px" width="26" height="26" viewBox="0 0 26 26"><circle cx="12.9" cy="12.1" r="12" fill="#00c13b"/><path d="M5.3 11.9 L10.6 17 L20 8.3" fill="none" stroke="#fff" stroke-width="3" stroke-linecap="round" stroke-linejoin="round"/></svg>
<svg class="abs" style="left:274px;top:467px" width="26" height="26" viewBox="0 0 26 26"><circle cx="12.9" cy="12.1" r="12" fill="#00c13b"/><path d="M5.3 11.9 L10.6 17 L20 8.3" fill="none" stroke="#fff" stroke-width="3" stroke-linecap="round" stroke-linejoin="round"/></svg>
<svg class="abs" style="left:340px;top:469px" width="23" height="21" viewBox="0 0 23 21"><path d="M11.5 2 L21.4 19.2 H1.6 Z" fill="#00c13b" stroke="#00c13b" stroke-width="2.6" stroke-linejoin="round"/><path d="M11.5 4.6 V14.2" stroke="#fff" stroke-width="1.7"/><rect x="10.65" y="17" width="1.7" height="1.4" fill="#fff"/></svg>
<div class="t" style="left:412px;top:473px;font-size:12px;color:#5a6169">48511</div>
<div class="t" style="left:511px;top:473px;font-size:11.5px;color:#5a6169">Transferência usuário CS331952</div>
<div class="t" style="left:767px;top:473px;font-size:12px;color:#5a6169">Transferir</div>
<div class="t" style="left:854px;top:473px;font-size:12px;color:#5a6169">Coletando Informações</div>
<div class="t" style="left:1047px;top:473px;font-size:12px;color:#5a6169">8</div>
<div class="t" style="left:1119px;top:473px;font-size:12px;color:#5a6169">01-10-2025 20:19</div>
<div class="abs" style="left:1269px;top:466.5px;width:26px;height:27px;background:#0784d2"></div>
<svg class="abs" style="left:1276px;top:472px" width="13" height="14" viewBox="0 0 13 14" fill="none" stroke="#fff" stroke-width="0.9"><path d="M2.3 9.8 V1.2 Q2.3 0.6 3 0.6 H7.6 L10.8 3.8 V9.8"/><path d="M7.6 0.8 V3.8 H10.6" stroke-width="0.7"/><text x="6.5" y="12.8" font-size="4.2" font-weight="bold" fill="#fff" stroke="none" text-anchor="middle" font-family="Liberation Sans" textLength="9" lengthAdjust="spacingAndGlyphs">XLSX</text></svg>
<div class="abs" style="left:1301px;top:469px;width:25px;height:25px;background:#e00028"></div>
<svg class="abs" style="left:1307px;top:475px" width="13" height="13" viewBox="0 0 13 13" fill="none" stroke="#fff" stroke-width="1.2" stroke-linejoin="round"><path d="M0.6 3.3 H12.4 M3.8 3.2 V1.6 Q3.8 0.8 4.6 0.8 H8.4 Q9.2 0.8 9.2 1.6 V3.2 M2.2 3.4 V10.8 Q2.2 11.9 3.3 11.9 H9.7 Q10.8 11.9 10.8 10.8 V3.4 M4.5 5.4 V10 M6.5 5.4 V10 M8.5 5.4 V10" stroke-width="1"/></svg>
<div class="abs" style="left:1332px;top:469px;width:25px;height:25px;background:#00336b;border:1px solid #1b8cff"></div>
<svg class="abs" style="left:1337px;top:474px" width="15" height="14" viewBox="0 0 15 14" fill="none" stroke="#fff" stroke-width="1"><path d="M1.5 0.5 V12.4 H14.2"/><path d="M3.5 11.4 V6 M6.5 11.4 V3 M8.5 11.4 V6 M11.5 11.4 V3" stroke-width="1"/></svg>
<svg class="abs" style="left:207px;top:507px" width="26" height="26" viewBox="0 0 26 26"><circle cx="12.9" cy="12.1" r="12" fill="#00c13b"/><path d="M5.3 11.9 L10.6 17 L20 8.3" fill="none" stroke="#fff" stroke-width="3" stroke-linecap="round" stroke-linejoin="round"/></svg>
<svg class="abs" style="left:274px;top:507px" width="26" height="26" viewBox="0 0 26 26"><circle cx="12.9" cy="12.1" r="12" fill="#00c13b"/><path d="M5.3 11.9 L10.6 17 L20 8.3" fill="none" stroke="#fff" stroke-width="3" stroke-linecap="round" stroke-linejoin="round"/></svg>
<svg class="abs" style="left:340px;top:509px" width="23" height="21" viewBox="0 0 23 21"><path d="M11.5 2 L21.4 19.2 H1.6 Z" fill="#00c13b" stroke="#00c13b" stroke-width="2.6" stroke-linejoin="round"/><path d="M11.5 4.6 V14.2" stroke="#fff" stroke-width="1.7"/><rect x="10.65" y="17" width="1.7" height="1.4" fill="#fff"/></svg>
<div class="t" style="left:412px;top:513px;font-size:12px;color:#5a6169">48508</div>
<div class="t" style="left:511px;top:513px;font-size:11.5px;color:#5a6169">Transferência usuário CS268017</div>
<div class="t" style="left:767px;top:513px;font-size:12px;color:#5a6169">Transferir</div>
<div class="t" style="left:854px;top:513px;font-size:12px;color:#5a6169">Coletando Informações</div>
<div class="t" style="left:1047px;top:513px;font-size:12px;color:#5a6169">8</div>
<div class="t" style="left:1119px;top:513px;font-size:12px;color:#5a6169">01-10-2025 20:19</div>
<div class="abs" style="left:1269px;top:506.5px;width:26px;height:27px;background:#0784d2"></div>
<svg class="abs" style="left:1276px;top:512px" width="13" height="14" viewBox="0 0 13 14" fill="none" stroke="#fff" stroke-width="0.9"><path d="M2.3 9.8 V1.2 Q2.3 0.6 3 0.6 H7.6 L10.8 3.8 V9.8"/><path d="M7.6 0.8 V3.8 H10.6" stroke-width="0.7"/><text x="6.5" y="12.8" font-size="4.2" font-weight="bold" fill="#fff" stroke="none" text-anchor="middle" font-family="Liberation Sans" textLength="9" lengthAdjust="spacingAndGlyphs">XLSX</text></svg>
<div class="abs" style="left:1301px;top:509px;width:25px;height:25px;background:#e00028"></div>
<svg class="abs" style="left:1307px;top:515px" width="13" height="13" viewBox="0 0 13 13" fill="none" stroke="#fff" stroke-width="1.2" stroke-linejoin="round"><path d="M0.6 3.3 H12.4 M3.8 3.2 V1.6 Q3.8 0.8 4.6 0.8 H8.4 Q9.2 0.8 9.2 1.6 V3.2 M2.2 3.4 V10.8 Q2.2 11.9 3.3 11.9 H9.7 Q10.8 11.9 10.8 10.8 V3.4 M4.5 5.4 V10 M6.5 5.4 V10 M8.5 5.4 V10" stroke-width="1"/></svg>
<div class="abs" style="left:1332px;top:509px;width:25px;height:25px;background:#00336b;border:1px solid #1b8cff"></div>
<svg class="abs" style="left:1337px;top:514px" width="15" height="14" viewBox="0 0 15 14" fill="none" stroke="#fff" stroke-width="1"><path d="M1.5 0.5 V12.4 H14.2"/><path d="M3.5 11.4 V6 M6.5 11.4 V3 M8.5 11.4 V6 M11.5 11.4 V3" stroke-width="1"/></svg>
<svg class="abs" style="left:207px;top:547px" width="26" height="26" viewBox="0 0 26 26"><circle cx="12.9" cy="12.1" r="12" fill="#00c13b"/><path d="M5.3 11.9 L10.6 17 L20 8.3" fill="none" stroke="#fff" stroke-width="3" stroke-linecap="round" stroke-linejoin="round"/></svg>
<svg class="abs" style="left:274px;top:547px" width="26" height="26" viewBox="0 0 26 26"><circle cx="12.9" cy="12.1" r="12" fill="#00c13b"/><path d="M5.3 11.9 L10.6 17 L20 8.3" fill="none" stroke="#fff" stroke-width="3" stroke-linecap="round" stroke-linejoin="round"/></svg>
<svg class="abs" style="left:340px;top:549px" width="23" height="21" viewBox="0 0 23 21"><path d="M11.5 2 L21.4 19.2 H1.6 Z" fill="#00c13b" stroke="#00c13b" stroke-width="2.6" stroke-linejoin="round"/><path d="M11.5 4.6 V14.2" stroke="#fff" stroke-width="1.7"/><rect x="10.65" y="17" width="1.7" height="1.4" fill="#fff"/></svg>
<div class="t" style="left:412px;top:553px;font-size:12px;color:#5a6169">48507</div>
<div class="t" style="left:511px;top:553px;font-size:11.5px;color:#5a6169">Transferência usuário CS263386</div>
<div class="t" style="left:767px;top:553px;font-size:12px;color:#5a6169">Transferir</div>
<div class="t" style="left:854px;top:553px;font-size:12px;color:#5a6169">Coletando Informações</div>
<div class="t" style="left:1047px;top:553px;font-size:12px;color:#5a6169">8</div>
<div class="t" style="left:1119px;top:553px;font-size:12px;color:#5a6169">01-10-2025 20:19</div>
<div class="abs" style="left:1269px;top:546.5px;width:26px;height:27px;background:#0784d2"></div>
<svg class="abs" style="left:1276px;top:552px" width="13" height="14" viewBox="0 0 13 14" fill="none" stroke="#fff" stroke-width="0.9"><path d="M2.3 9.8 V1.2 Q2.3 0.6 3 0.6 H7.6 L10.8 3.8 V9.8"/><path d="M7.6 0.8 V3.8 H10.6" stroke-width="0.7"/><text x="6.5" y="12.8" font-size="4.2" font-weight="bold" fill="#fff" stroke="none" text-anchor="middle" font-family="Liberation Sans" textLength="9" lengthAdjust="spacingAndGlyphs">XLSX</text></svg>
<div class="abs" style="left:1301px;top:549px;width:25px;height:25px;background:#e00028"></div>
<svg class="abs" style="left:1307px;top:555px" width="13" height="13" viewBox="0 0 13 13" fill="none" stroke="#fff" stroke-width="1.2" stroke-linejoin="round"><path d="M0.6 3.3 H12.4 M3.8 3.2 V1.6 Q3.8 0.8 4.6 0.8 H8.4 Q9.2 0.8 9.2 1.6 V3.2 M2.2 3.4 V10.8 Q2.2 11.9 3.3 11.9 H9.7 Q10.8 11.9 10.8 10.8 V3.4 M4.5 5.4 V10 M6.5 5.4 V10 M8.5 5.4 V10" stroke-width="1"/></svg>
<div class="abs" style="left:1332px;top:549px;width:25px;height:25px;background:#00336b;border:1px solid #1b8cff"></div>
<svg class="abs" style="left:1337px;top:554px" width="15" height="14" viewBox="0 0 15 14" fill="none" stroke="#fff" stroke-width="1"><path d="M1.5 0.5 V12.4 H14.2"/><path d="M3.5 11.4 V6 M6.5 11.4 V3 M8.5 11.4 V6 M11.5 11.4 V3" stroke-width="1"/></svg>
<svg class="abs" style="left:207px;top:587px" width="26" height="26" viewBox="0 0 26 26"><circle cx="12.9" cy="12.1" r="12" fill="#00c13b"/><path d="M5.3 11.9 L10.6 17 L20 8.3" fill="none" stroke="#fff" stroke-width="3" stroke-linecap="round" stroke-linejoin="round"/></svg>
<svg class="abs" style="left:274px;top:587px" width="26" height="26" viewBox="0 0 26 26"><circle cx="12.9" cy="12.1" r="12" fill="#00c13b"/><path d="M5.3 11.9 L10.6 17 L20 8.3" fill="none" stroke="#fff" stroke-width="3" stroke-linecap="round" stroke-linejoin="round"/></svg>
<svg class="abs" style="left:340px;top:589px" width="23" height="21" viewBox="0 0 23 21"><path d="M11.5 2 L21.4 19.2 H1.6 Z" fill="#00c13b" stroke="#00c13b" stroke-width="2.6" stroke-linejoin="round"/><path d="M11.5 4.6 V14.2" stroke="#fff" stroke-width="1.7"/><rect x="10.65" y="17" width="1.7" height="1.4" fill="#fff"/></svg>
<div class="t" style="left:412px;top:593px;font-size:12px;color:#5a6169">48494</div>
<div class="t" style="left:511px;top:593px;font-size:11.5px;color:#5a6169">Transferência usuário CS443087</div>
<div class="t" style="left:767px;top:593px;font-size:12px;color:#5a6169">Transferir</div>
<div class="t" style="left:854px;top:593px;font-size:12px;color:#5a6169">Coletando Informações</div>
<div class="t" style="left:1047px;top:593px;font-size:12px;color:#5a6169">8</div>
<div class="t" style="left:1119px;top:593px;font-size:12px;color:#5a6169">01-10-2025 20:19</div>
<div class="abs" style="left:1269px;top:586.5px;width:26px;height:27px;background:#0784d2"></div>
<svg class="abs" style="left:1276px;top:592px" width="13" height="14" viewBox="0 0 13 14" fill="none" stroke="#fff" stroke-width="0.9"><path d="M2.3 9.8 V1.2 Q2.3 0.6 3 0.6 H7.6 L10.8 3.8 V9.8"/><path d="M7.6 0.8 V3.8 H10.6" stroke-width="0.7"/><text x="6.5" y="12.8" font-size="4.2" font-weight="bold" fill="#fff" stroke="none" text-anchor="middle" font-family="Liberation Sans" textLength="9" lengthAdjust="spacingAndGlyphs">XLSX</text></svg>
<div class="abs" style="left:1301px;top:589px;width:25px;height:25px;background:#e00028"></div>
<svg class="abs" style="left:1307px;top:595px" width="13" height="13" viewBox="0 0 13 13" fill="none" stroke="#fff" stroke-width="1.2" stroke-linejoin="round"><path d="M0.6 3.3 H12.4 M3.8 3.2 V1.6 Q3.8 0.8 4.6 0.8 H8.4 Q9.2 0.8 9.2 1.6 V3.2 M2.2 3.4 V10.8 Q2.2 11.9 3.3 11.9 H9.7 Q10.8 11.9 10.8 10.8 V3.4 M4.5 5.4 V10 M6.5 5.4 V10 M8.5 5.4 V10" stroke-width="1"/></svg>
<div class="abs" style="left:1332px;top:589px;width:25px;height:25px;background:#00336b;border:1px solid #1b8cff"></div>
<svg class="abs" style="left:1337px;top:594px" width="15" height="14" viewBox="0 0 15 14" fill="none" stroke="#fff" stroke-width="1"><path d="M1.5 0.5 V12.4 H14.2"/><path d="M3.5 11.4 V6 M6.5 11.4 V3 M8.5 11.4 V6 M11.5 11.4 V3" stroke-width="1"/></svg>
<svg class="abs" style="left:207px;top:627px" width="26" height="26" viewBox="0 0 26 26"><circle cx="12.9" cy="12.1" r="12" fill="#00c13b"/><path d="M5.3 11.9 L10.6 17 L20 8.3" fill="none" stroke="#fff" stroke-width="3" stroke-linecap="round" stroke-linejoin="round"/></svg>
<svg class="abs" style="left:274px;top:627px" width="26" height="26" viewBox="0 0 26 26"><circle cx="12.9" cy="12.1" r="12" fill="#00c13b"/><path d="M5.3 11.9 L10.6 17 L20 8.3" fill="none" stroke="#fff" stroke-width="3" stroke-linecap="round" stroke-linejoin="round"/></svg>
<svg class="abs" style="left:340px;top:629px" width="23" height="21" viewBox="0 0 23 21"><path d="M11.5 2 L21.4 19.2 H1.6 Z" fill="#00c13b" stroke="#00c13b" stroke-width="2.6" stroke-linejoin="round"/><path d="M11.5 4.6 V14.2" stroke="#fff" stroke-width="1.7"/><rect x="10.65" y="17" width="1.7" height="1.4" fill="#fff"/></svg>
<div class="t" style="left:412px;top:633px;font-size:12px;color:#5a6169">48493</div>
<div class="t" style="left:511px;top:633px;font-size:11.5px;color:#5a6169">Transferência usuário CS443075</div>
<div class="t" style="left:767px;top:633px;font-size:12px;color:#5a6169">Transferir</div>
<div class="t" style="left:854px;top:633px;font-size:12px;color:#5a6169">Coletando Informações</div>
<div class="t" style="left:1047px;top:633px;font-size:12px;color:#5a6169">8</div>
<div class="t" style="left:1119px;top:633px;font-size:12px;color:#5a6169">01-10-2025 20:19</div>
<div class="abs" style="left:1269px;top:626.5px;width:26px;height:27px;background:#0784d2"></div>
<svg class="abs" style="left:1276px;top:632px" width="13" height="14" viewBox="0 0 13 14" fill="none" stroke="#fff" stroke-width="0.9"><path d="M2.3 9.8 V1.2 Q2.3 0.6 3 0.6 H7.6 L10.8 3.8 V9.8"/><path d="M7.6 0.8 V3.8 H10.6" stroke-width="0.7"/><text x="6.5" y="12.8" font-size="4.2" font-weight="bold" fill="#fff" stroke="none" text-anchor="middle" font-family="Liberation Sans" textLength="9" lengthAdjust="spacingAndGlyphs">XLSX</text></svg>
<div class="abs" style="left:1301px;top:629px;width:25px;height:25px;background:#e00028"></div>
<svg class="abs" style="left:1307px;top:635px" width="13" height="13" viewBox="0 0 13 13" fill="none" stroke="#fff" stroke-width="1.2" stroke-linejoin="round"><path d="M0.6 3.3 H12.4 M3.8 3.2 V1.6 Q3.8 0.8 4.6 0.8 H8.4 Q9.2 0.8 9.2 1.6 V3.2 M2.2 3.4 V10.8 Q2.2 11.9 3.3 11.9 H9.7 Q10.8 11.9 10.8 10.8 V3.4 M4.5 5.4 V10 M6.5 5.4 V10 M8.5 5.4 V10" stroke-width="1"/></svg>
<div class="abs" style="left:1332px;top:629px;width:25px;height:25px;background:#00336b;border:1px solid #1b8cff"></div>
<svg class="abs" style="left:1337px;top:634px" width="15" height="14" viewBox="0 0 15 14" fill="none" stroke="#fff" stroke-width="1"><path d="M1.5 0.5 V12.4 H14.2"/><path d="M3.5 11.4 V6 M6.5 11.4 V3 M8.5 11.4 V6 M11.5 11.4 V3" stroke-width="1"/></svg>
<svg class="abs" style="left:207px;top:667px" width="26" height="26" viewBox="0 0 26 26"><circle cx="12.9" cy="12.1" r="12" fill="#00c13b"/><path d="M5.3 11.9 L10.6 17 L20 8.3" fill="none" stroke="#fff" stroke-width="3" stroke-linecap="round" stroke-linejoin="round"/></svg>
<svg class="abs" style="left:274px;top:667px" width="26" height="26" viewBox="0 0 26 26"><circle cx="12.9" cy="12.1" r="12" fill="#00c13b"/><path d="M5.3 11.9 L10.6 17 L20 8.3" fill="none" stroke="#fff" stroke-width="3" stroke-linecap="round" stroke-linejoin="round"/></svg>
<svg class="abs" style="left:340px;top:669px" width="23" height="21" viewBox="0 0 23 21"><path d="M11.5 2 L21.4 19.2 H1.6 Z" fill="#00c13b" stroke="#00c13b" stroke-width="2.6" stroke-linejoin="round"/><path d="M11.5 4.6 V14.2" stroke="#fff" stroke-width="1.7"/><rect x="10.65" y="17" width="1.7" height="1.4" fill="#fff"/></svg>
<div class="t" style="left:412px;top:673px;font-size:12px;color:#5a6169">48491</div>
<div class="t" style="left:511px;top:673px;font-size:11.5px;color:#5a6169">Transferência usuário CS443040</div>
<div class="t" style="left:767px;top:673px;font-size:12px;color:#5a6169">Transferir</div>
<div class="t" style="left:854px;top:673px;font-size:12px;color:#5a6169">Coletando Informações</div>
<div class="t" style="left:1047px;top:673px;font-size:12px;color:#5a6169">8</div>
<div class="t" style="left:1119px;top:673px;font-size:12px;color:#5a6169">01-10-2025 20:19</div>
<div class="abs" style="left:1269px;top:666.5px;width:26px;height:27px;background:#0784d2"></div>
<svg class="abs" style="left:1276px;top:672px" width="13" height="14" viewBox="0 0 13 14" fill="none" stroke="#fff" stroke-width="0.9"><path d="M2.3 9.8 V1.2 Q2.3 0.6 3 0.6 H7.6 L10.8 3.8 V9.8"/><path d="M7.6 0.8 V3.8 H10.6" stroke-width="0.7"/><text x="6.5" y="12.8" font-size="4.2" font-weight="bold" fill="#fff" stroke="none" text-anchor="middle" font-family="Liberation Sans" textLength="9" lengthAdjust="spacingAndGlyphs">XLSX</text></svg>
<div class="abs" style="left:1301px;top:669px;width:25px;height:25px;background:#e00028"></div>
<svg class="abs" style="left:1307px;top:675px" width="13" height="13" viewBox="0 0 13 13" fill="none" stroke="#fff" stroke-width="1.2" stroke-linejoin="round"><path d="M0.6 3.3 H12.4 M3.8 3.2 V1.6 Q3.8 0.8 4.6 0.8 H8.4 Q9.2 0.8 9.2 1.6 V3.2 M2.2 3.4 V10.8 Q2.2 11.9 3.3 11.9 H9.7 Q10.8 11.9 10.8 10.8 V3.4 M4.5 5.4 V10 M6.5 5.4 V10 M8.5 5.4 V10" stroke-width="1"/></svg>
<div class="abs" style="left:1332px;top:669px;width:25px;height:25px;background:#00336b;border:1px solid #1b8cff"></div>
<svg class="abs" style="left:1337px;top:674px" width="15" height="14" viewBox="0 0 15 14" fill="none" stroke="#fff" stroke-width="1"><path d="M1.5 0.5 V12.4 H14.2"/><path d="M3.5 11.4 V6 M6.5 11.4 V3 M8.5 11.4 V6 M11.5 11.4 V3" stroke-width="1"/></svg>
<svg class="abs" style="left:207px;top:707px" width="26" height="26" viewBox="0 0 26 26"><circle cx="12.9" cy="12.1" r="12" fill="#00c13b"/><path d="M5.3 11.9 L10.6 17 L20 8.3" fill="none" stroke="#fff" stroke-width="3" stroke-linecap="round" stroke-linejoin="round"/></svg>
<svg class="abs" style="left:274px;top:707px" width="26" height="26" viewBox="0 0 26 26"><circle cx="12.9" cy="12.1" r="12" fill="#00c13b"/><path d="M5.3 11.9 L10.6 17 L20 8.3" fill="none" stroke="#fff" stroke-width="3" stroke-linecap="round" stroke-linejoin="round"/></svg>
<svg class="abs" style="left:340px;top:709px" width="23" height="21" viewBox="0 0 23 21"><path d="M11.5 2 L21.4 19.2 H1.6 Z" fill="#00c13b" stroke="#00c13b" stroke-width="2.6" stroke-linejoin="round"/><path d="M11.5 4.6 V14.2" stroke="#fff" stroke-width="1.7"/><rect x="10.65" y="17" width="1.7" height="1.4" fill="#fff"/></svg>
<div class="t" style="left:412px;top:713px;font-size:12px;color:#5a6169">48488</div>
<div class="t" style="left:511px;top:713px;font-size:11.5px;color:#5a6169">Transferência usuário CS436105</div>
<div class="t" style="left:767px;top:713px;font-size:12px;color:#5a6169">Transferir</div>
<div class="t" style="left:854px;top:713px;font-size:12px;color:#5a6169">Coletando Informações</div>
<div class="t" style="left:1047px;top:713px;font-size:12px;color:#5a6169">8</div>
<div class="t" style="left:1119px;top:713px;font-size:12px;color:#5a6169">01-10-2025 20:19</div>
<div class="abs" style="left:1269px;top:706.5px;width:26px;height:27px;background:#0784d2"></div>
<svg class="abs" style="left:1276px;top:712px" width="13" height="14" viewBox="0 0 13 14" fill="none" stroke="#fff" stroke-width="0.9"><path d="M2.3 9.8 V1.2 Q2.3 0.6 3 0.6 H7.6 L10.8 3.8 V9.8"/><path d="M7.6 0.8 V3.8 H10.6" stroke-width="0.7"/><text x="6.5" y="12.8" font-size="4.2" font-weight="bold" fill="#fff" stroke="none" text-anchor="middle" font-family="Liberation Sans" textLength="9" lengthAdjust="spacingAndGlyphs">XLSX</text></svg>
<div class="abs" style="left:1301px;top:709px;width:25px;height:25px;background:#e00028"></div>
<svg class="abs" style="left:1307px;top:715px" width="13" height="13" viewBox="0 0 13 13" fill="none" stroke="#fff" stroke-width="1.2" stroke-linejoin="round"><path d="M0.6 3.3 H12.4 M3.8 3.2 V1.6 Q3.8 0.8 4.6 0.8 H8.4 Q9.2 0.8 9.2 1.6 V3.2 M2.2 3.4 V10.8 Q2.2 11.9 3.3 11.9 H9.7 Q10.8 11.9 10.8 10.8 V3.4 M4.5 5.4 V10 M6.5 5.4 V10 M8.5 5.4 V10" stroke-width="1"/></svg>
<div class="abs" style="left:1332px;top:709px;width:25px;height:25px;background:#00336b;border:1px solid #1b8cff"></div>
<svg class="abs" style="left:1337px;top:714px" width="15" height="14" viewBox="0 0 15 14" fill="none" stroke="#fff" stroke-width="1"><path d="M1.5 0.5 V12.4 H14.2"/><path d="M3.5 11.4 V6 M6.5 11.4 V3 M8.5 11.4 V6 M11.5 11.4 V3" stroke-width="1"/></svg>
<svg class="abs" style="left:207px;top:747px" width="26" height="26" viewBox="0 0 26 26"><circle cx="12.9" cy="12.1" r="12" fill="#00c13b"/><path d="M5.3 11.9 L10.6 17 L20 8.3" fill="none" stroke="#fff" stroke-width="3" stroke-linecap="round" stroke-linejoin="round"/></svg>
<svg class="abs" style="left:274px;top:747px" width="26" height="26" viewBox="0 0 26 26"><circle cx="12.9" cy="12.1" r="12" fill="#00c13b"/><path d="M5.3 11.9 L10.6 17 L20 8.3" fill="none" stroke="#fff" stroke-width="3" stroke-linecap="round" stroke-linejoin="round"/></svg>
<svg class="abs" style="left:340px;top:749px" width="23" height="21" viewBox="0 0 23 21"><path d="M11.5 2 L21.4 19.2 H1.6 Z" fill="#00c13b" stroke="#00c13b" stroke-width="2.6" stroke-linejoin="round"/><path d="M11.5 4.6 V14.2" stroke="#fff" stroke-width="1.7"/><rect x="10.65" y="17" width="1.7" height="1.4" fill="#fff"/></svg>
<div class="t" style="left:412px;top:753px;font-size:12px;color:#5a6169">48483</div>
<div class="t" style="left:511px;top:753px;font-size:11.5px;color:#5a6169">Transferência usuário CS431713</div>
<div class="t" style="left:767px;top:753px;font-size:12px;color:#5a6169">Transferir</div>
<div class="t" style="left:854px;top:753px;font-size:12px;color:#5a6169">Coletando Informações</div>
<div class="t" style="left:1047px;top:753px;font-size:12px;color:#5a6169">8</div>
<div class="t" style="left:1119px;top:753px;font-size:12px;color:#5a6169">01-10-2025 20:19</div>
<div class="abs" style="left:1269px;top:746.5px;width:26px;height:27px;background:#0784d2"></div>
<svg class="abs" style="left:1276px;top:752px" width="13" height="14" viewBox="0 0 13 14" fill="none" stroke="#fff" stroke-width="0.9"><path d="M2.3 9.8 V1.2 Q2.3 0.6 3 0.6 H7.6 L10.8 3.8 V9.8"/><path d="M7.6 0.8 V3.8 H10.6" stroke-width="0.7"/><text x="6.5" y="12.8" font-size="4.2" font-weight="bold" fill="#fff" stroke="none" text-anchor="middle" font-family="Liberation Sans" textLength="9" lengthAdjust="spacingAndGlyphs">XLSX</text></svg>
<div class="abs" style="left:1301px;top:749px;width:25px;height:25px;background:#e00028"></div>
<svg class="abs" style="left:1307px;top:755px" width="13" height="13" viewBox="0 0 13 13" fill="none" stroke="#fff" stroke-width="1.2" stroke-linejoin="round"><path d="M0.6 3.3 H12.4 M3.8 3.2 V1.6 Q3.8 0.8 4.6 0.8 H8.4 Q9.2 0.8 9.2 1.6 V3.2 M2.2 3.4 V10.8 Q2.2 11.9 3.3 11.9 H9.7 Q10.8 11.9 10.8 10.8 V3.4 M4.5 5.4 V10 M6.5 5.4 V10 M8.5 5.4 V10" stroke-width="1"/></svg>
<div class="abs" style="left:1332px;top:749px;width:25px;height:25px;background:#00336b;border:1px solid #1b8cff"></div>
<svg class="abs" style="left:1337px;top:754px" width="15" height="14" viewBox="0 0 15 14" fill="none" stroke="#fff" stroke-width="1"><path d="M1.5 0.5 V12.4 H14.2"/><path d="M3.5 11.4 V6 M6.5 11.4 V3 M8.5 11.4 V6 M11.5 11.4 V3" stroke-width="1"/></svg>
<div class="abs" style="left:1428px;top:67px;width:10px;height:713px;background:#fafafa;border-left:1px solid #ececec"></div>
<svg class="abs" style="left:1431px;top:71px" width="7" height="6" viewBox="0 0 7 6"><path d="M0.3 5.6 L3.5 0.4 L6.7 5.6 Z" fill="#8e8e8e"/></svg>
<div class="abs" style="left:1431px;top:81px;width:6px;height:202px;border-radius:3px;background:#8e8e8e"></div>
<svg class="abs" style="left:1431px;top:771px" width="7" height="6" viewBox="0 0 7 6"><path d="M0.3 0.4 L3.5 5.6 L6.7 0.4 Z" fill="#8e8e8e"/></svg>
<div class="abs" style="left:0;top:780px;width:1438px;height:1px;background:#3f4347"></div>
</body></html>
